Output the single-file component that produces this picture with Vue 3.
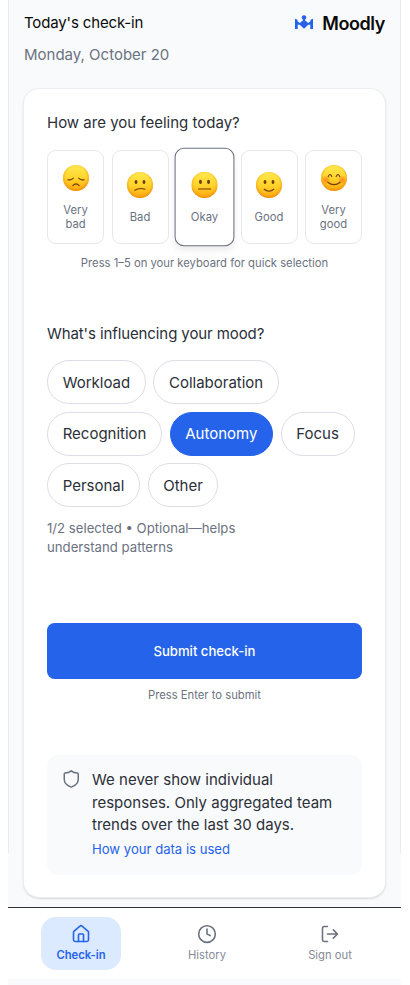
<script setup>
import { ref } from 'vue'

const moods = [
  { id: 'very-bad', label: 'Very bad' },
  { id: 'bad', label: 'Bad' },
  { id: 'okay', label: 'Okay' },
  { id: 'good', label: 'Good' },
  { id: 'very-good', label: 'Very good' },
]
const mood = ref('okay')
const factors = ['Workload', 'Collaboration', 'Recognition', 'Autonomy', 'Focus', 'Personal', 'Other']
const selected = ref(['Autonomy'])

function toggle(name) {
  if (selected.value.includes(name)) {
    selected.value = selected.value.filter((f) => f !== name)
  } else if (selected.value.length < 2) {
    selected.value = [...selected.value, name]
  }
}
</script>

<template>
  <div class="page">
    <main class="screen">
      <header class="top">
        <div>
          <h1 class="title">Today's check-in</h1>
          <p class="date">Monday, October 20</p>
        </div>
        <div class="brand">
          <svg class="logo" viewBox="0 0 18 15" fill="#2563eb">
            <circle cx="9" cy="2.500" r="2.300" />
            <path d="M8.100 4h1.800v1.200l3.300 2.700 2.300-1.700V4.700L18 3.800V14h-2.700V9.700h-2L9 13.800 4.700 9.700h-2V14H0V3.800l2.500.9v1.500l2.300 1.700 3.300-2.700z" />
          </svg>
          <span class="brand-name">Moodly</span>
        </div>
      </header>

      <section class="card">
        <h2 class="question">How are you feeling today?</h2>
        <div class="moods">
          <button
            v-for="m in moods"
            :key="m.id"
            class="mood"
            :class="{ active: mood === m.id }"
            @click="mood = m.id"
          >
            <svg class="face" viewBox="0 0 26 26">
              <defs>
                <linearGradient :id="'skin-' + m.id" x1="0" y1="0" x2="0" y2="1">
                  <stop offset="0" stop-color="#ffe94f" />
                  <stop offset=".5" stop-color="#ffd52c" />
                  <stop offset="1" stop-color="#fda60c" />
                </linearGradient>
                <radialGradient :id="'edge-' + m.id" cx=".5" cy=".46" r=".54">
                  <stop offset=".74" stop-color="#f39a12" stop-opacity="0" />
                  <stop offset="1" stop-color="#ee8c0d" stop-opacity=".8" />
                </radialGradient>
                <radialGradient :id="'blush-' + m.id">
                  <stop offset="0" stop-color="#ff6c13" stop-opacity=".75" />
                  <stop offset="1" stop-color="#ff7b13" stop-opacity="0" />
                </radialGradient>
              </defs>
              <circle cx="13" cy="13" r="13" :fill="`url(#skin-${m.id})`" />
              <circle cx="13" cy="13" r="13" :fill="`url(#edge-${m.id})`" />
              <g v-if="m.id === 'very-bad'" class="lines">
                <path d="M4.800 14.700q3.400.8 5.500-1.500M21.200 14.700q-3.400.8-5.500-1.500" />
                <path d="M9.800 20.600q3.200-3.400 6.400 0" />
              </g>
              <template v-else-if="m.id === 'very-good'">
                <circle cx="4.800" cy="14.800" r="4.800" :fill="`url(#blush-${m.id})`" />
                <circle cx="21.200" cy="14.800" r="4.800" :fill="`url(#blush-${m.id})`" />
                <g class="lines">
                  <path d="M7.200 11.800q1.600-4.600 3.600-.2M15.200 11.600q2-4.400 3.600.2" />
                  <path d="M6.800 17.200q6.200 4.800 12.400 0" />
                </g>
              </template>
              <template v-else>
                <ellipse class="eye" cx="9" cy="10" rx="1.450" ry="2.100" />
                <ellipse class="eye" cx="17" cy="10" rx="1.450" ry="2.100" />
                <path v-if="m.id === 'bad'" class="lines" d="M7.800 18.300q4.600-3 10.200-1.100" />
                <path v-if="m.id === 'okay'" class="lines" d="M7 17.100h12" />
                <path v-if="m.id === 'good'" class="lines" d="M8.200 17.300q4.800 3.800 9.600 0" />
              </template>
            </svg>
            <span class="mood-label">{{ m.label }}</span>
          </button>
        </div>
        <p class="hint">Press 1–5 on your keyboard for quick selection</p>

        <h2 class="question second">What's influencing your mood?</h2>
        <div class="chips">
          <button
            v-for="f in factors"
            :key="f"
            class="chip"
            :class="{ on: selected.includes(f) }"
            @click="toggle(f)"
          >{{ f }}</button>
        </div>
        <p class="count">{{ selected.length }}/2 selected • Optional—helps understand patterns</p>

        <button class="submit">Submit check-in</button>
        <p class="hint enter">Press Enter to submit</p>

        <aside class="privacy">
          <svg class="shield" viewBox="0 0 16 18">
            <path d="M8 .9C6.500 2.300 4 3.100 1.800 3.100Q1 3.100 1 3.900V9.200C1 13.300 3.900 15.600 8 17.100C12.100 15.600 15 13.300 15 9.200V3.900Q15 3.100 14.200 3.100C12 3.100 9.500 2.300 8 .9Z" />
          </svg>
          <div>
            <p class="privacy-text">We never show individual responses. Only aggregated team trends over the last 30 days.</p>
            <a class="privacy-link">How your data is used</a>
          </div>
        </aside>
      </section>
    </main>

    <nav class="nav">
      <a class="tab current">
        <svg class="icon" viewBox="0 0 24 24">
          <path d="M15 21v-8a1 1 0 0 0-1-1h-4a1 1 0 0 0-1 1v8" />
          <path d="M3 10a2 2 0 0 1 .709-1.528l7-5.999a2 2 0 0 1 2.582 0l7 5.999A2 2 0 0 1 21 10v9a2 2 0 0 1-2 2H5a2 2 0 0 1-2-2z" />
        </svg>
        <span>Check-in</span>
      </a>
      <a class="tab">
        <svg class="icon" viewBox="0 0 24 24">
          <circle cx="12" cy="12" r="10" />
          <path d="M12 6v6l4 2" />
        </svg>
        <span class="tab-label">History</span>
      </a>
      <a class="tab">
        <svg class="icon" viewBox="0 0 24 24">
          <path d="M9 21H5a2 2 0 0 1-2-2V5a2 2 0 0 1 2-2h4M16 17l5-5-5-5M21 12H9" />
        </svg>
        <span class="tab-label">Sign out</span>
      </a>
    </nav>
  </div>
</template>

<style>
body {
  background: #fff;
}
</style>

<style scoped>
* {
  box-sizing: border-box;
}
h1, h2, p {
  margin: 0;
  font-weight: 400;
}
button {
  font: inherit;
  padding: 0;
  cursor: pointer;
}
.page {
  width: 393px;
  height: 985px;
  margin-left: 8px;
  overflow: hidden;
  background: #f9fafb;
  font-family: Inter, sans-serif;
  color: #2b3038;
}
.screen {
  height: 907px;
  padding: 0 15px;
  border: solid #e9ebef;
  border-width: 0 1px;
  border-image: linear-gradient(#e9ebef 852px, #f9fafb 852px) 1;
  border-image-width: 0 1px;
}
.top {
  display: flex;
  justify-content: space-between;
  height: 89px;
  padding-top: 11px;
}
.title {
  padding-top: 1px;
  font-size: 15px;
  line-height: 22px;
  letter-spacing: -0.15px;
  color: #0a0a0a;
}
.date {
  margin-top: 10px;
  font-size: 15px;
  line-height: 22px;
  color: #6b7280;
}
.brand {
  display: flex;
  align-items: center;
  gap: 9.500px;
  height: 25px;
}
.logo {
  width: 18px;
  height: 15px;
  margin-bottom: 3px;
}
.brand-name {
  font-size: 18px;
  font-weight: 600;
  letter-spacing: -0.4px;
  color: #0a0a0a;
}
.card {
  height: 808px;
  padding: 22px 23px 0;
  background: #fff;
  border-radius: 15px;
  box-shadow: 0 0 0 1px #eceef1, 0 1px 3px rgba(0, 0, 0, 0.2), 0 1px 2px rgba(0, 0, 0, 0.12);
}
.question {
  font-size: 15px;
  line-height: 23px;
}
.moods {
  display: grid;
  grid-template-columns: repeat(5, 1fr);
  gap: 7.500px;
  margin-top: 15.500px;
}
.mood {
  display: flex;
  flex-direction: column;
  align-items: center;
  justify-content: center;
  gap: 12px;
  height: 94px;
  padding-top: 2px;
  border: 1.500px solid #e5e7eb;
  border-radius: 9px;
  background: #fff;
  color: #6b7280;
}
.mood.active {
  border-color: #6b7280;
  transform: scale(1.05);
  box-shadow: 0 4px 6px rgba(0, 0, 0, 0.07);
}
.face {
  width: 26px;
  height: 26px;
}
.active .face {
  width: 25px;
  height: 25px;
}
.eye {
  fill: #733b0a;
}
.lines {
  fill: none;
  stroke: #733b0a;
  stroke-width: 1.100;
  stroke-linecap: round;
}
.mood-label {
  width: 34px;
  font-size: 11.250px;
  line-height: 14px;
  text-align: center;
}
.active .mood-label {
  font-size: 10.800px;
}
.hint {
  margin-top: 11.500px;
  font-size: 11.250px;
  line-height: 17px;
  text-align: center;
  color: #6b7280;
}
.second {
  margin-top: 50px;
  letter-spacing: -0.1px;
}
.chips {
  display: flex;
  flex-wrap: wrap;
  gap: 7.500px;
  margin-top: 15px;
}
.chip {
  height: 44px;
  padding: 0 14.650px;
  border: 1px solid #dcdee3;
  border-radius: 22px;
  background: #fff;
  font-size: 15px;
  color: #2b3038;
}
.chip.on {
  background: #2563eb;
  border-color: #2563eb;
  color: #fff;
}
.count {
  width: 215px;
  margin-top: 12px;
  font-size: 13.180px;
  line-height: 19px;
  color: #6b7280;
}
.submit {
  display: block;
  width: 100%;
  height: 56px;
  margin-top: 66px;
  border: 0;
  border-radius: 7.500px;
  background: #2563eb;
  color: #fff;
  font-size: 13.120px;
  font-weight: 500;
}
.enter {
  margin-top: 8px;
}
.privacy {
  display: flex;
  gap: 12.500px;
  height: 120px;
  margin-top: 50.500px;
  padding: 14.500px 16px;
  border-radius: 11px;
  background: #f9fafb;
}
.shield {
  flex: none;
  width: 16.500px;
  height: 18px;
  margin-top: 1px;
  fill: none;
  stroke: #6b7280;
  stroke-width: 1.500;
  stroke-linejoin: round;
}
.privacy-text {
  width: 250px;
  font-size: 15px;
  line-height: 22.600px;
  letter-spacing: 0.02px;
}
.privacy-link {
  display: block;
  margin-top: 3.500px;
  font-size: 13.120px;
  line-height: 19px;
  color: #2563eb;
}
.nav {
  display: flex;
  align-items: flex-start;
  justify-content: space-between;
  height: 72px;
  padding: 9px 31px 0 33px;
  border-top: 1px solid #333;
  background: #fff;
}
.tab {
  display: flex;
  flex-direction: column;
  align-items: center;
  justify-content: center;
  gap: 3px;
  width: 80px;
  height: 53px;
  padding-top: 1px;
  border-radius: 15px;
  font-size: 11.250px;
  line-height: 17px;
  color: #6b7280;
}
.nav .tab:nth-child(2) {
  padding-left: 3px;
}
.tab-label {
  color: #858a96;
}
.tab.current {
  background: #dbeafe;
  color: #2563eb;
  font-weight: 600;
}
.icon {
  width: 20px;
  height: 20px;
  fill: none;
  stroke: currentColor;
  stroke-width: 1.900;
  stroke-linecap: round;
  stroke-linejoin: round;
}
</style>
